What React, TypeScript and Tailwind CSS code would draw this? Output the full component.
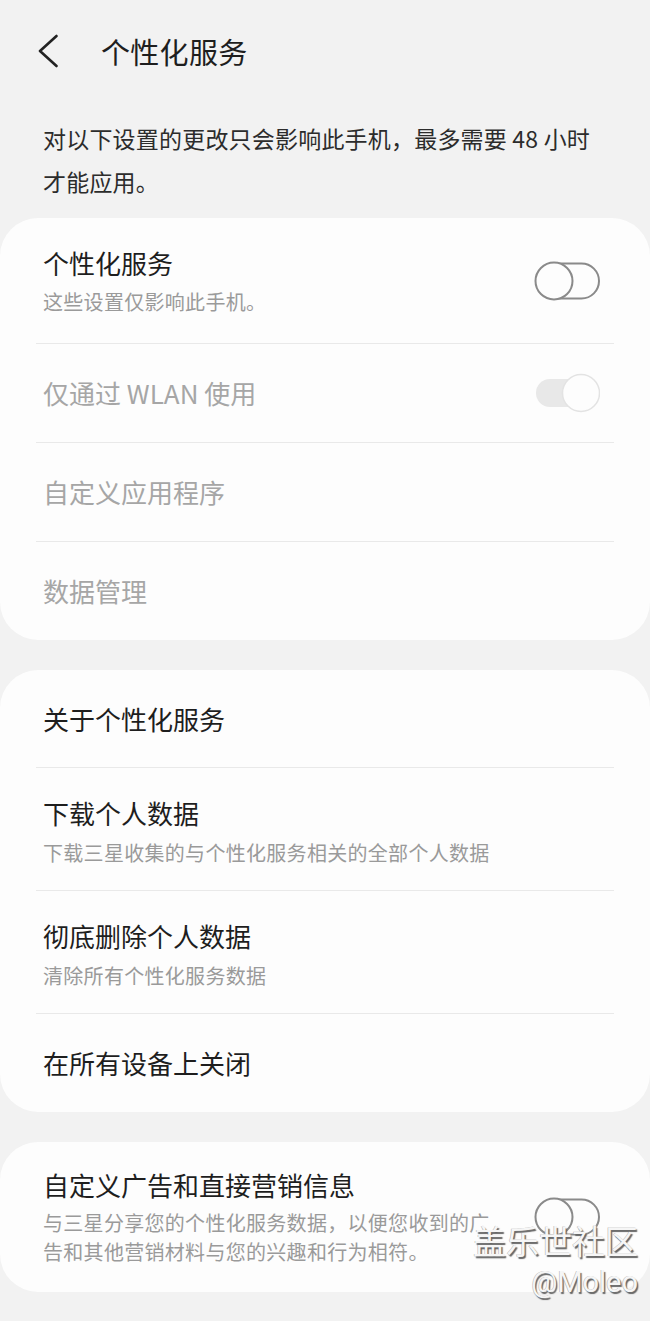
import React from "react";

const FONT = { fontFamily: '"Noto Sans CJK SC", "Noto Sans", Roboto, sans-serif' };

function ToggleOff() {
  return (
    <svg width="66" height="40" viewBox="0 0 66 40" className="shrink-0">
      <rect x="4" y="2.5" width="61" height="35" rx="17.5" fill="#fdfdfd" stroke="#8a8a8a" strokeWidth="2" />
      <circle cx="20" cy="20" r="18.5" fill="#fdfdfd" stroke="#8a8a8a" strokeWidth="2" />
    </svg>
  );
}

function ToggleOnDisabled() {
  return (
    <svg width="66" height="40" viewBox="0 0 66 40" className="shrink-0">
      <rect x="2" y="6" width="54" height="28" rx="14" fill="#e8e8e8" />
      <circle cx="47" cy="20" r="18.5" fill="#fdfdfd" stroke="#e3e3e3" strokeWidth="1.5" />
    </svg>
  );
}

function Divider() {
  return <div className="mx-[36px] h-px bg-[#e9e9e9]" />;
}

export default function App() {
  return (
    <div className="relative w-[650px] min-h-[1321px] bg-[#f2f2f2] pb-[29px]" style={FONT}>
      {/* Header */}
      <div className="flex h-[102px] items-center pl-[38px]">
        <svg width="20" height="34" viewBox="0 0 20 34" className="shrink-0">
          <path d="M18.5 2 L2 17 L18.5 32" fill="none" stroke="#222" strokeWidth="2.6" strokeLinecap="round" strokeLinejoin="round" />
        </svg>
        <div className="ml-[43px] text-[29px] leading-[40px] tracking-[0.3px] text-[#1e1e1e]">个性化服务</div>
      </div>

      {/* Description */}
      <div className="px-[43px] py-[15px] text-[23px] leading-[43px] tracking-[0.2px] text-[#2c2c2c]">
        <div className="whitespace-nowrap">对以下设置的更改只会影响此手机，最多需要 48 小时</div>
        <div>才能应用。</div>
      </div>

      {/* Card 1 */}
      <div className="rounded-[38px] bg-[#fdfdfd]">
        <div className="flex h-[125px] items-center justify-between pl-[43px] pr-[50px]">
          <div>
            <div className="text-[26px] leading-[34px] text-[#1e1e1e]">个性化服务</div>
            <div className="mt-[8px] text-[20px] leading-[28px] tracking-[0.3px] text-[#9a9a9a]">这些设置仅影响此手机。</div>
          </div>
          <ToggleOff />
        </div>
        <Divider />
        <div className="flex h-[98px] items-center justify-between pl-[43px] pr-[50px]">
          <div className="text-[26px] leading-[34px] text-[#a6a6a6]">仅通过 WLAN 使用</div>
          <ToggleOnDisabled />
        </div>
        <Divider />
        <div className="flex h-[98px] items-center pl-[43px]">
          <div className="text-[26px] leading-[34px] text-[#a6a6a6]">自定义应用程序</div>
        </div>
        <Divider />
        <div className="flex h-[98px] items-center pl-[43px]">
          <div className="text-[26px] leading-[34px] text-[#a6a6a6]">数据管理</div>
        </div>
      </div>

      {/* Card 2 */}
      <div className="mt-[30px] rounded-[38px] bg-[#fdfdfd]">
        <div className="flex h-[97px] items-center pl-[43px]">
          <div className="text-[26px] leading-[34px] text-[#1e1e1e]">关于个性化服务</div>
        </div>
        <Divider />
        <div className="h-[122px] pl-[43px] pt-[28px]">
          <div className="text-[26px] leading-[34px] text-[#1e1e1e]">下载个人数据</div>
          <div className="mt-[9px] text-[20px] leading-[28px] tracking-[0.3px] text-[#9a9a9a]">下载三星收集的与个性化服务相关的全部个人数据</div>
        </div>
        <Divider />
        <div className="h-[122px] pl-[43px] pt-[28px]">
          <div className="text-[26px] leading-[34px] text-[#1e1e1e]">彻底删除个人数据</div>
          <div className="mt-[9px] text-[20px] leading-[28px] tracking-[0.3px] text-[#9a9a9a]">清除所有个性化服务数据</div>
        </div>
        <Divider />
        <div className="flex h-[98px] items-center pl-[43px]">
          <div className="text-[26px] leading-[34px] text-[#1e1e1e]">在所有设备上关闭</div>
        </div>
      </div>

      {/* Card 3 */}
      <div className="mt-[30px] flex h-[150px] items-center justify-between rounded-[38px] bg-[#fdfdfd] pl-[43px] pr-[50px]">
        <div className="w-[452px]">
          <div className="text-[26px] leading-[34px] text-[#1e1e1e]">自定义广告和直接营销信息</div>
          <div className="mt-[6px] text-[20px] leading-[29px] tracking-[0.3px] text-[#9a9a9a]">
            与三星分享您的个性化服务数据，以便您收到的广告和其他营销材料与您的兴趣和行为相符。
          </div>
        </div>
        <ToggleOff />
      </div>

      {/* Watermark */}
      <div className="pointer-events-none absolute right-[12px] top-[1217px] flex flex-col items-end text-[#f6f6f6] [text-shadow:1.5px_1.5px_1px_#666666,-0.5px_-0.5px_0_#b0b0b0]">
        <div className="text-[33px] leading-[46px]">盖乐世社区</div>
        <div className="text-[29px] leading-[38px]" style={{ fontFamily: 'Roboto, "Noto Sans", sans-serif' }}>
          @Moleo
        </div>
      </div>
    </div>
  );
}
